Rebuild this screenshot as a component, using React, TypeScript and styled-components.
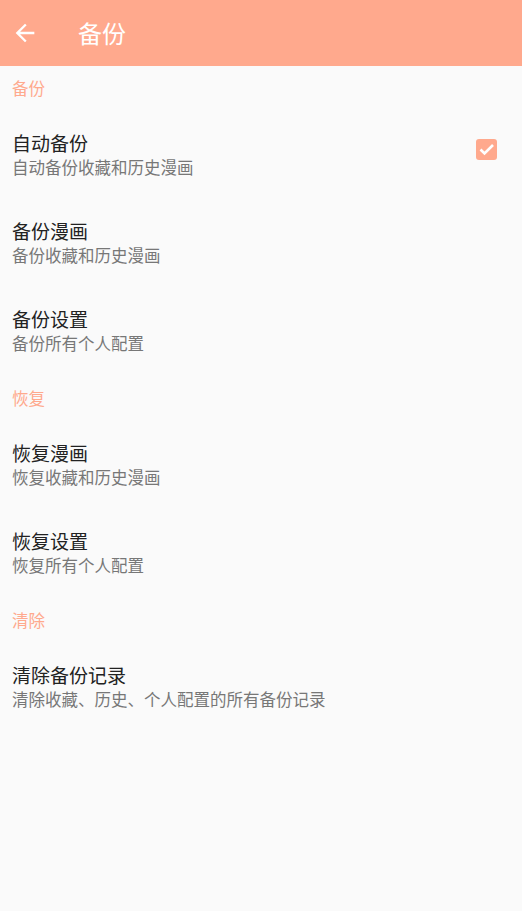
import styled, { createGlobalStyle } from 'styled-components';

const GlobalStyle = createGlobalStyle`
  html, body {
    margin: 0;
    padding: 0;
    background: #fafafa;
  }
  body {
    font-family: "Noto Sans CJK SC", Roboto, sans-serif;
    font-weight: 400;
  }
`;

const Page = styled.div`
  width: 522px;
  min-height: 911px;
  background: #fafafa;
`;

const Toolbar = styled.div`
  height: 66px;
  background: #ffa98d;
  display: flex;
  align-items: center;
  color: #ffffff;
`;

const BackButton = styled.div`
  width: 28px;
  height: 28px;
  margin-left: 11px;
  display: flex;
  align-items: center;
  justify-content: center;
`;

const ToolbarTitle = styled.h1`
  margin: 0 0 0 39px;
  font-size: 24px;
  font-weight: 400;
  line-height: 1;
`;

const SectionHeader = styled.div`
  height: 46px;
  box-sizing: border-box;
  padding: 0 12px 2px;
  display: flex;
  align-items: center;
  font-size: 16.5px;
  color: #ffa98d;
`;

const Item = styled.div`
  height: 88px;
  box-sizing: border-box;
  display: flex;
  align-items: center;
  padding: 0 25px 4px 12px;
`;

const ItemText = styled.div`
  flex: 1;
  display: flex;
  flex-direction: column;
  gap: 3px;
`;

const ItemTitle = styled.div`
  font-size: 19px;
  color: #222222;
  line-height: 23px;
`;

const ItemSummary = styled.div`
  font-size: 16.5px;
  color: #777777;
  line-height: 20px;
`;

const CheckBox = styled.div`
  width: 21px;
  height: 21px;
  border-radius: 3px;
  background: #ffa98d;
  display: flex;
  margin-top: -10px;
`;

type Pref = { title: string; summary: string; checked?: boolean };

const sections: { header: string; items: Pref[] }[] = [
  {
    header: '备份',
    items: [
      { title: '自动备份', summary: '自动备份收藏和历史漫画', checked: true },
      { title: '备份漫画', summary: '备份收藏和历史漫画' },
      { title: '备份设置', summary: '备份所有个人配置' },
    ],
  },
  {
    header: '恢复',
    items: [
      { title: '恢复漫画', summary: '恢复收藏和历史漫画' },
      { title: '恢复设置', summary: '恢复所有个人配置' },
    ],
  },
  {
    header: '清除',
    items: [{ title: '清除备份记录', summary: '清除收藏、历史、个人配置的所有备份记录' }],
  },
];

export default function App() {
  return (
    <Page>
      <GlobalStyle />
      <Toolbar>
        <BackButton>
          <svg width="28" height="28" viewBox="0 0 24 24" fill="#ffffff">
            <path d="M20 11H7.83l5.59-5.59L12 4l-8 8 8 8 1.41-1.41L7.83 13H20v-2z" />
          </svg>
        </BackButton>
        <ToolbarTitle>备份</ToolbarTitle>
      </Toolbar>
      {sections.map((section) => (
        <div key={section.header}>
          <SectionHeader>{section.header}</SectionHeader>
          {section.items.map((item) => (
            <Item key={item.title}>
              <ItemText>
                <ItemTitle>{item.title}</ItemTitle>
                <ItemSummary>{item.summary}</ItemSummary>
              </ItemText>
              {item.checked && (
                <CheckBox>
                  <svg width="21" height="21" viewBox="0 0 21 21">
                    <polyline
                      points="4.5,10.5 8.5,14.5 17,6"
                      fill="none"
                      stroke="#ffffff"
                      strokeWidth="2.6"
                    />
                  </svg>
                </CheckBox>
              )}
            </Item>
          ))}
        </div>
      ))}
    </Page>
  );
}
